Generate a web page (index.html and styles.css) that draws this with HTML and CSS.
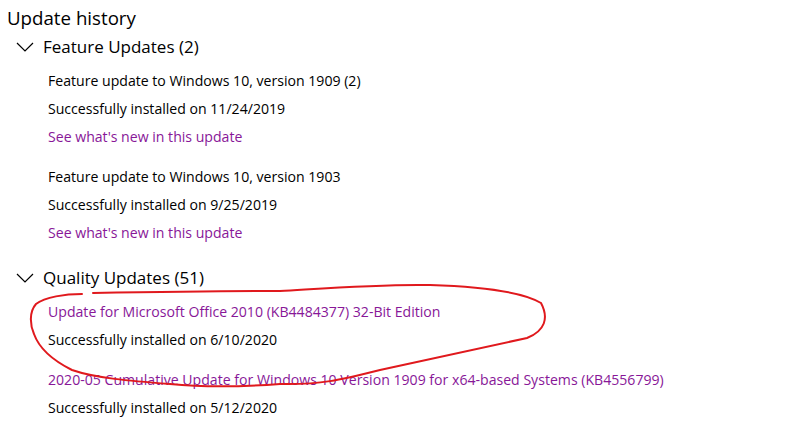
FILE: index.html
```html
<!DOCTYPE html>
<html lang="en">
<head>
<meta charset="utf-8">
<title>Update history</title>
<link rel="stylesheet" href="styles.css">
</head>
<body>
<main class="page">
  <h1 class="title">Update history</h1>

  <section class="group">
    <div class="group-head">
      <svg class="chev" width="18" height="10" viewBox="0 0 18 10"><polyline points="1,1 9,9 17,1" /></svg>
      <span class="group-label">Feature Updates (2)</span>
    </div>
    <div class="items">
      <div class="item">
        <div class="line">Feature update to Windows 10, version 1909 (2)</div>
        <div class="line">Successfully installed on 11/24/2019</div>
        <div class="line link">See what's new in this update</div>
      </div>
      <div class="item">
        <div class="line">Feature update to Windows 10, version 1903</div>
        <div class="line">Successfully installed on 9/25/2019</div>
        <div class="line link">See what's new in this update</div>
      </div>
    </div>
  </section>

  <section class="group">
    <div class="group-head">
      <svg class="chev" width="18" height="10" viewBox="0 0 18 10"><polyline points="1,1 9,9 17,1" /></svg>
      <span class="group-label">Quality Updates (51)</span>
    </div>
    <div class="items">
      <div class="item">
        <div class="line link">Update for Microsoft Office 2010 (KB4484377) 32-Bit Edition</div>
        <div class="line">Successfully installed on 6/10/2020</div>
      </div>
      <div class="item">
        <div class="line link">2020-05 Cumulative Update for Windows 10 Version 1909 for x64-based Systems (KB4556799)</div>
        <div class="line">Successfully installed on 5/12/2020</div>
      </div>
    </div>
  </section>

  <svg class="scribble" width="804" height="440" viewBox="0 0 804 440">
    <path d="M82,294 C65,294 45,297 36,304 C29,312 30,325 34,334 C39,348 52,360 72,370 C95,378 130,381 170,384 C200,387 240,387 280,384 C320,385 340,380 380,370 C420,361 470,350 527,338 C545,331 549,318 541,303 C525,293 490,287 430,285 C380,284 330,288 280,291 C220,291 150,292 93,293" />
  </svg>
</main>
</body>
</html>
```

FILE: styles.css
```css
html, body {
  margin: 0;
  padding: 0;
  background: #ffffff;
}

body {
  font-family: "Segoe UI", "Open Sans", "Noto Sans", sans-serif;
  color: #000000;
  width: 804px;
  height: 440px;
  overflow: hidden;
}

.page {
  position: relative;
  width: 804px;
  height: 440px;
}

.title {
  margin: 0;
  padding-left: 7px;
  font-size: 18.7px;
  font-weight: 400;
  line-height: 36px;
  height: 36px;
}

.group {
  display: flex;
  flex-direction: column;
}

.group + .group {
  margin-top: 20px;
}

.group-head {
  display: flex;
  align-items: center;
  height: 22px;
  padding-left: 16px;
  gap: 9px;
}

.chev {
  display: block;
  fill: none;
  stroke: #000000;
  stroke-width: 1.2;
}

.group-label {
  font-size: 17px;
  line-height: 22px;
}

.items {
  margin-top: 9px;
  padding-left: 48px;
  display: flex;
  flex-direction: column;
  gap: 12px;
}

.line {
  font-size: 14.1px;
  line-height: 28px;
  height: 28px;
  white-space: nowrap;
}

.link {
  color: #881798;
}

.scribble {
  position: absolute;
  left: 0;
  top: 0;
  pointer-events: none;
  fill: none;
  stroke: #e0191d;
  stroke-width: 2;
  stroke-linecap: round;
}
```
